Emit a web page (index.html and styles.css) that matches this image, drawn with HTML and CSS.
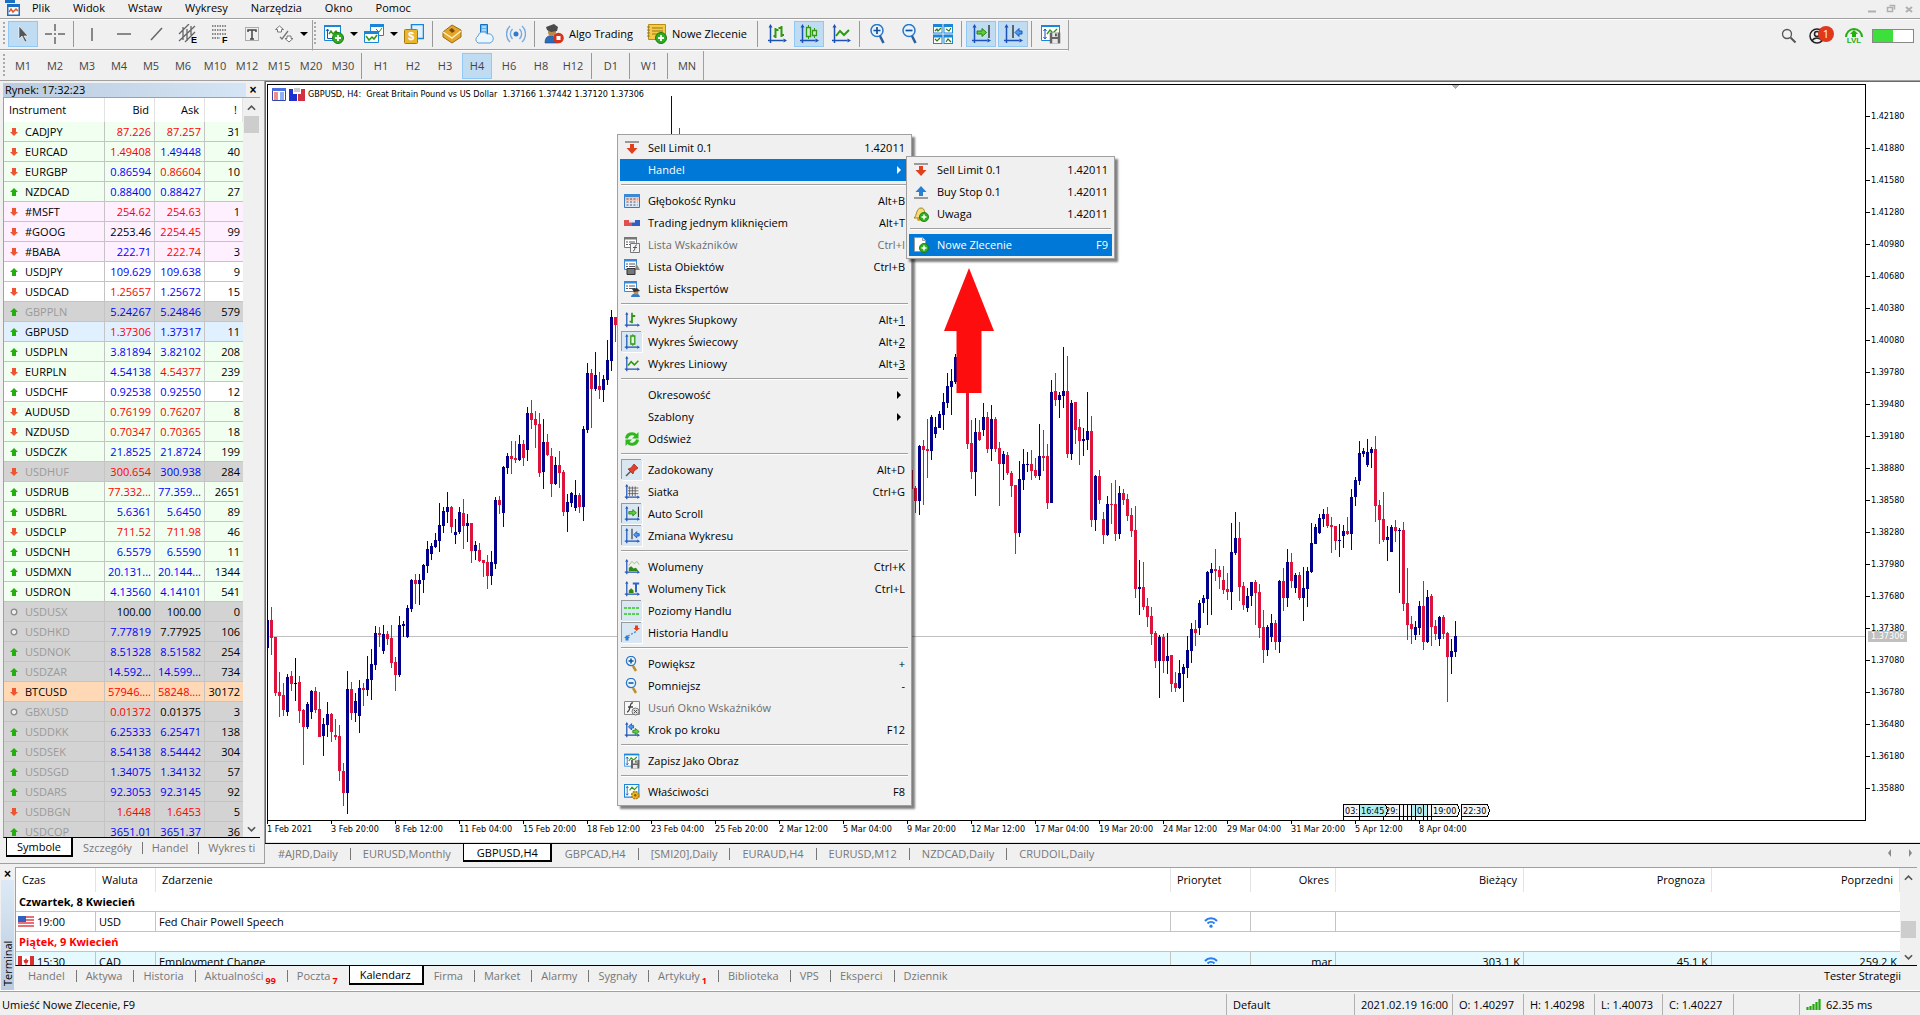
FILE: index.html
```html
<!DOCTYPE html>
<html lang="pl">
<head>
<meta charset="utf-8">
<title>GBPUSD,H4</title>
<link rel="stylesheet" href="styles.css">
</head>
<body>
<svg class="sprite" aria-hidden="true">
  <symbol id="axes" viewBox="0 0 20 20"><path class="ax" d="M3.5 3v13.500h13M1 16.500h2.500M3.500 16.500v2.500"/><path fill="#1b52b8" d="M3.500 0l2 3.500h-4zM20 16.500l-3.500-2v4z"/></symbol>
  <symbol id="plus-badge" viewBox="0 0 12 12"><circle cx="6" cy="6" r="5.500" fill="#2fae1f" stroke="#187a10"/><path d="M6 3v6M3 6h6" stroke="#fff" stroke-width="1.800"/></symbol>
  <symbol id="disk" viewBox="0 0 12 12"><path fill="#666" d="M0 0h12v12H0z"/><path fill="#e6e6e6" d="M3 0h6v5H3zM3 7h6v5H3z"/><path fill="#555" d="M6 1h2v3H6z"/></symbol>
  <symbol id="app" viewBox="0 0 16 16"><path fill="#1a6fc4" d="M1 0h10v3H1zM3 4h13v12H3z"/><path fill="#fff" d="M4.500 7h10v7.500h-10z"/><path d="M5 12l2-3 2 3 3-3 2 2" fill="none" stroke="#e2552c" stroke-width="1.500"/></symbol>
  <symbol id="cursor" viewBox="0 0 20 20"><path d="M6 2v13l3-3 3 6 2-1-3-5h4z" fill="#555" stroke="#fff" stroke-width=".6"/></symbol>
  <symbol id="cross" viewBox="0 0 20 20"><path d="M10 0v7M10 13v7M0 10h7M13 10h7M9 10h2" stroke="#666" stroke-width="1.500"/></symbol>
  <symbol id="vline" viewBox="0 0 20 20"><path d="M10 4v13" stroke="#666" stroke-width="1.500"/></symbol>
  <symbol id="hline" viewBox="0 0 20 20"><path d="M3 10h14" stroke="#666" stroke-width="1.500"/></symbol>
  <symbol id="slash" viewBox="0 0 20 20"><path d="M5 16L16 4" stroke="#666" stroke-width="1.500"/></symbol>
  <symbol id="text" viewBox="0 0 20 20"><path d="M3.500 3.500h13v13h-13z" fill="none" stroke="#666" stroke-dasharray="1 1"/><path d="M6 8V6h8v2M10 6v9M8 15h4" fill="none" stroke="#444" stroke-width="1.500"/></symbol>
  <symbol id="shapes" viewBox="0 0 20 20"><path d="M5.500 2l4 3.500h-2V8h-4V5.500h-2zM15 18l-4-3.500h2V12h4v2.500h2z" fill="#fff" stroke="#777"/><path d="M6 13l2 2 6-8" fill="none" stroke="#777" stroke-width="1.300"/></symbol>
  <symbol id="newchart" viewBox="0 0 20 20"><path d="M.5 1.500h16v15H.5z" fill="#fff" stroke="#1a86d8"/><path fill="#1a86d8" d="M0 1h17v2H0z"/><path d="M3.500 5v9.500H12M2 7l1.500-2L5 7" fill="none" stroke="#1b52b8"/><path d="M5 10l2-3 2 3 3-3 3 4" fill="none" stroke="#2e9a12" stroke-width="1.400"/><use href="#plus-badge" x="8" y="8" width="12" height="12"/></symbol>
  <symbol id="windows" viewBox="0 0 20 20"><path d="M6.500 1.500h13v10h-13z" fill="#fff" stroke="#1a86d8"/><path fill="#1a86d8" d="M6 0h14v3H6z"/><path d="M12 5l3 3 3-4" fill="none" stroke="#2e9a12"/><path d="M.5 8.500h14v10H.5z" fill="#fff" stroke="#1a86d8"/><path fill="#1a86d8" d="M0 7h15v3H0z"/><path d="M2 12l3 4 3-3 2 2 3-4" fill="none" stroke="#2e9a12" stroke-width="1.500"/></symbol>
  <symbol id="coins" viewBox="0 0 20 20"><path d="M1 8l9-7 9 5v7l-9 6-9-6z" fill="#e5a52c" stroke="#9a6a10"/><path d="M1 8l9 6 9-7" fill="none" stroke="#fff0b8" stroke-width="1.500"/><path d="M7 6l3-2 3 3-3 2z" fill="#7b4b08"/></symbol>
  <symbol id="cloud" viewBox="0 0 20 20"><path d="M6.500.5h7V12h-7z" fill="#5ab4f0" stroke="#1670c0"/><path d="M8 3h4M8 6h4" stroke="#fff"/><path d="M4 19a4 4 0 010-7 5 5 0 019-2 4.500 4.500 0 013 9z" fill="#eef6fd" stroke="#5a9fd8"/></symbol>
  <symbol id="signal" viewBox="0 0 20 20"><circle cx="10" cy="10" r="2.500" fill="#2f7ad0"/><path d="M6.500 5a7 7 0 000 10M13.500 5a7 7 0 010 10M4 2a11 11 0 000 16M16 2a11 11 0 010 16" fill="none" stroke="#76a9e0" stroke-width="1.400"/></symbol>
  <symbol id="algo" viewBox="0 0 20 20"><path d="M1 19c0-6 3-8 8-7l5 7z" fill="#2d6cb8" stroke="#244a80" stroke-width=".6"/><circle cx="8" cy="8" r="4" fill="#b8894a"/><path d="M2 3l8-3 4 3-1 4-6 1-4-2z" fill="#4b4b4b"/><circle cx="14.500" cy="14" r="5.300" fill="#d8321c"/><path fill="#fff" d="M12.500 12h4v4h-4z"/></symbol>
  <symbol id="order" viewBox="0 0 20 20"><path d="M1.500.5h17v15h-17z" fill="#f3cb46" stroke="#bb8b12"/><path d="M5 4h11M5 7h11M5 10h6" stroke="#9b7411"/><path d="M0 3h3M0 6h3M0 9h3M0 12h3" stroke="#777"/><use href="#plus-badge" x="8" y="8" width="12" height="12"/></symbol>
  <symbol id="bars" viewBox="0 0 20 20"><use href="#axes"/><path d="M8.500 4v10M8.500 12H6.500M8.500 6h3M14.500 2v11M14.500 4h-3M14.500 11h2.500" fill="none" stroke="#2e9a12" stroke-width="2"/></symbol>
  <symbol id="bar1" viewBox="0 0 20 20"><use href="#axes"/><path d="M10 1v13M10 12H7M10 5h4" fill="none" stroke="#2e9a12" stroke-width="2.200"/></symbol>
  <symbol id="candles" viewBox="0 0 20 20"><use href="#axes"/><path d="M9.500 1v14M15.500 4v10" stroke="#2e9a12"/><path d="M7.500 3.500h4v9h-4zM13.500 6.500h4v5h-4z" fill="#cfe8cf" stroke="#2e9a12" stroke-width="1.300"/></symbol>
  <symbol id="candle1" viewBox="0 0 20 20"><use href="#axes"/><path d="M11 0v15" stroke="#2e9a12"/><path d="M8.500 2.500h5v10h-5z" fill="#e4f4e0" stroke="#2e9a12" stroke-width="1.600"/></symbol>
  <symbol id="linec" viewBox="0 0 20 20"><use href="#axes"/><path d="M5 12l4-5 4 4 5-5" fill="none" stroke="#2e9a12" stroke-width="2"/></symbol>
  <symbol id="zin" viewBox="0 0 20 20"><path d="M10.500 11l4 8" stroke="#2a5f9a" stroke-width="2.500"/><circle cx="8" cy="6.500" r="6" fill="#e6f4ff" stroke="#2a78c8" stroke-width="1.500"/><path d="M8 3v7M4.500 6.500h7" stroke="#154f98" stroke-width="1.700"/></symbol>
  <symbol id="zout" viewBox="0 0 20 20"><path d="M10.500 11l4 8" stroke="#2a5f9a" stroke-width="2.500"/><circle cx="8" cy="6.500" r="6" fill="#e6f4ff" stroke="#2a78c8" stroke-width="1.500"/><path d="M4.500 6.500h7" stroke="#154f98" stroke-width="1.700"/></symbol>
  <symbol id="tiles" viewBox="0 0 20 20"><path fill="#1a86d8" d="M0 0h9.500v9.500H0zM10.500 0H20v9.500h-9.500zM0 10.500h9.500V20H0zM10.500 10.500H20V20h-9.500z"/><path fill="#fff" d="M1 3h7.500v5.500H1zM11.500 3H19v5.500h-7.500zM1 13.500h7.500V19H1zM11.500 13.500H19V19h-7.500z"/><path d="M2 7l2-2 1 2 3-3M13 5l3 2 2-3M2 15l2 2 3-3M13 18l2-3 3 3" fill="none" stroke="#2e7a12" stroke-width="1.200"/></symbol>
  <symbol id="scroll" viewBox="0 0 20 20"><use href="#axes"/><path d="M18 1v13" stroke="#222" stroke-width="1.300"/><path d="M6 7h5V4.500L15.500 8.500 11 12.500V10H6z" fill="#5fce35" stroke="#23850f"/></symbol>
  <symbol id="shift" viewBox="0 0 20 20"><use href="#axes"/><path d="M10 1v13" stroke="#222" stroke-width="1.300"/><path d="M19 7h-3V4.500l-4 4 4 4V10h3z" fill="#4c9df0" stroke="#1b52b8"/></symbol>
  <symbol id="save" viewBox="0 0 20 20"><path d="M.5 1.500h18v15H.5z" fill="#fff" stroke="#1a86d8"/><path fill="#1a86d8" d="M0 1h19v2H0z"/><path d="M4 5v9M2.500 7L4 5l1.500 2M2.500 13L4 15l1.500-2" fill="none" stroke="#1b52b8"/><path d="M6 10l3-4 3 3 4-4" fill="none" stroke="#2e9a12" stroke-width="1.400"/><use href="#disk" x="8.500" y="8" width="11" height="12"/></symbol>
  <symbol id="gear" viewBox="0 0 20 20"><path d="M.5.5h18v16H.5z" fill="#fff" stroke="#1a86d8" stroke-width="1.500"/><path d="M4 3v11M2.500 5L4 3l1.500 2M2.500 12L4 14l1.500-2" fill="none" stroke="#1b52b8"/><path d="M7 8l3-4 3 3 4-4" fill="none" stroke="#2e9a12" stroke-width="1.400"/><circle cx="14" cy="14" r="4.500" fill="#eab62c" stroke="#b88208" stroke-width="2" stroke-dasharray="2.500 1"/><circle cx="14" cy="14" r="1.500" fill="#8a6205"/></symbol>
  <symbol id="sell" viewBox="0 0 16 16"><path d="M1 2h14" stroke="#444"/><path d="M6 4h4v4h3.500L8 14 2.500 8H6z" fill="#e2401c"/></symbol>
  <symbol id="buy" viewBox="0 0 16 16"><path d="M1 14h14" stroke="#444"/><path d="M6 12h4V8h3.500L8 2 2.500 8H6z" fill="#2a7fd4"/></symbol>
  <symbol id="bell" viewBox="0 0 16 16"><path d="M1 12c3-2 2-10 7-10s3 7 5 10z" fill="#f5dc7a" stroke="#a88417"/><circle cx="6" cy="13" r="2" fill="#d0a020"/><use href="#plus-badge" x="6" y="6" width="10" height="10"/></symbol>
  <symbol id="doc" viewBox="0 0 16 16"><path d="M1.500.5h8l3 3v11h-11z" fill="#fff" stroke="#999"/><path d="M9.500.5v3h3" fill="#ddd" stroke="#999"/><use href="#plus-badge" x="6" y="6" width="10" height="10"/></symbol>
  <symbol id="depth" viewBox="0 0 16 16"><path d="M.5 1.500h15v13H.5z" fill="#fff" stroke="#3a78c0"/><path fill="#3a88d8" d="M0 1h16v3H0z"/><path fill="#f6c8ba" d="M1 4h14v4.500H1z"/><path fill="#d8e8fa" d="M1 8.500h14V14H1z"/><path d="M2.500 6h11M2.500 9h11M2.500 12h11" stroke="#556" stroke-dasharray="2 1.500"/></symbol>
  <symbol id="oneclick" viewBox="0 0 16 16"><path fill="#e05050" d="M0 5h8v6H0z"/><path fill="#3060c0" d="M8 5h8v6H8z"/><path fill="#e8e8ee" d="M5 5h6v2.500H5z"/></symbol>
  <symbol id="list" viewBox="0 0 16 16"><path d="M.5 1.500h12v9H.5z" fill="#fff" stroke="currentColor"/><path fill="currentColor" d="M0 0h13v2.500H0z"/><path d="M2 5h2M5 5h6M2 7.500h2M5 7.500h6" stroke="#556"/></symbol>
  <symbol id="indic" viewBox="0 0 16 16"><use href="#list" color="#777"/><path d="M6.500 6.500h9v9h-9z" fill="#f4f4f4" stroke="#777"/><path d="M13 8c-3-1-1 6-4 6M9 10.500h4" fill="none" stroke="#555"/></symbol>
  <symbol id="objs" viewBox="0 0 16 16"><use href="#list" color="#3a88d8"/><path d="M12 4l4 7h-5z" fill="#888"/><path d="M3 9.500h8v6H3z" fill="#777" stroke="#333"/></symbol>
  <symbol id="experts" viewBox="0 0 16 16"><use href="#list" color="#3a88d8"/><path d="M7 16c0-4 8-5 9 0z" fill="#2d7cd0"/><circle cx="12" cy="11" r="2.500" fill="#c09050"/><path d="M8 8l5-1 3 3-6 1z" fill="#333"/></symbol>
  <symbol id="refresh" viewBox="0 0 16 16"><path d="M2.500 7.500a5.500 5.500 0 019.500-3M13.500 8.500a5.500 5.500 0 01-9.500 3" fill="none" stroke="#2fb81c" stroke-width="3"/><path fill="#2fb81c" d="M14.500 1v6.500H8zM1.500 15V8.500H8z"/></symbol>
  <symbol id="pin" viewBox="0 0 16 16"><path d="M2 14l5-5" stroke="#555" stroke-width="1.500"/><path d="M4 7l3-1 3-4 4 4-4 3-1 3z" fill="#e2402c" stroke="#a02010" stroke-width=".7"/></symbol>
  <symbol id="grid" viewBox="0 0 20 20"><use href="#axes"/><path d="M7 3v12M10.500 3v12M14 3v12M5 5h13M5 8.500h13M5 12h13" stroke="#555"/></symbol>
  <symbol id="vol" viewBox="0 0 20 20"><use href="#axes"/><path d="M6 8l4-5 3 3 3-3 3 4" fill="none" stroke="#7cc060"/><path fill="#2e8a12" d="M6 15v-4l3-2 3 3 3-1 3 4z"/></symbol>
  <symbol id="tick" viewBox="0 0 20 20"><use href="#axes"/><path fill="#2e8a12" d="M6 15v-3l3-3 3 3v3z"/><path d="M11 3h8M15 3v11" stroke="#2a66c8" stroke-width="2.500"/></symbol>
  <symbol id="levels" viewBox="0 0 16 16"><path d="M0 5h16M0 11h16" stroke="#2fc81c" stroke-width="1.600" stroke-dasharray="3 1"/></symbol>
  <symbol id="history" viewBox="0 0 16 16"><path d="M4 11L13 6" stroke="#4c86d8" stroke-width="1.300" stroke-dasharray="2 1.500"/><path fill="#2a7fd4" d="M3 10l3 3H4.500v2.500h-3V13H0z"/><path fill="#e2401c" d="M12.500 6L9.500 3H11V.5h3V3h2z"/></symbol>
  <symbol id="mzin" viewBox="0 0 16 16"><path d="M9 10l3 5" stroke="#c0902c" stroke-width="2.500"/><circle cx="7" cy="5" r="4.600" fill="#e6f4ff" stroke="#2a78c8" stroke-width="1.300"/><path d="M7 2.500v5M4.500 5h5" stroke="#154f98" stroke-width="1.500"/></symbol>
  <symbol id="mzout" viewBox="0 0 16 16"><path d="M9 10l3 5" stroke="#c0902c" stroke-width="2.500"/><circle cx="7" cy="5" r="4.600" fill="#e6f4ff" stroke="#2a78c8" stroke-width="1.300"/><path d="M4.500 5h5" stroke="#154f98" stroke-width="1.500"/></symbol>
  <symbol id="delind" viewBox="0 0 16 16"><path d="M.5 1.500h15v13H.5z" fill="#f8f8f8" stroke="#888"/><path d="M9 3C5 2 7 12 3 12M4 7h5" fill="none" stroke="#444" stroke-width="1.300"/><circle cx="11.500" cy="11.500" r="3.500" fill="#ddd" stroke="#777"/><path d="M10 10l3 3M13 10l-3 3" stroke="#555"/></symbol>
  <symbol id="step" viewBox="0 0 20 20"><use href="#axes"/><path d="M12 7.500H9.500V10L5.500 6l4-4v2.500H12z" fill="#4c9df0" stroke="#1b52b8"/><path d="M11 10.500h3V8l5 4-5 4v-2.500h-3z" fill="#5fce35" stroke="#23850f"/></symbol>
  <symbol id="up" viewBox="0 0 8 8"><path d="M4 0l4 4H6v4H2V4H0z" fill="#22b00c"/></symbol>
  <symbol id="down" viewBox="0 0 8 8"><path d="M4 8l4-4H6V0H2v4H0z" fill="#ee5530"/></symbol>
  <symbol id="flat" viewBox="0 0 8 8"><circle cx="4" cy="4" r="2.800" fill="#eee" stroke="#888" stroke-width="1.300"/></symbol>
  <symbol id="wifi" viewBox="0 0 14 12"><path d="M1 5a8 8 0 0112 0M3.500 7.500a5 5 0 017 0" fill="none" stroke="#2a7cf0" stroke-width="2"/><circle cx="7" cy="10.200" r="1.600" fill="#2a7cf0"/></symbol>
  <symbol id="us" viewBox="0 0 16 11"><path fill="#fff" d="M0 0h16v11H0z"/><path d="M0 1h16M0 4h16M0 7h16M0 10h16" stroke="#e0404a" stroke-width="1.600"/><path fill="#3060c0" d="M0 0h8v6H0z"/></symbol>
  <symbol id="ca" viewBox="0 0 16 11"><path fill="#fff" d="M0 0h16v11H0z"/><path fill="#d83030" d="M0 0h4v11H0zM12 0h4v11h-4zM8 2l1 2 1.500 0-1 3H8.500v2h-1V7h-1l-1-3H7z"/></symbol>
  <symbol id="cup" viewBox="0 0 10 6"><path d="M1 5l4-4 4 4" fill="none" stroke="#555" stroke-width="1.800"/></symbol>
  <symbol id="cdown" viewBox="0 0 10 6"><path d="M1 1l4 4 4-4" fill="none" stroke="#555" stroke-width="1.800"/></symbol>
</svg>

<header>
  <nav class="menubar">
    <svg class="i16"><use href="#app"/></svg>
    <button>Plik</button><button>Widok</button><button>Wstaw</button><button>Wykresy</button><button>Narzędzia</button><button>Okno</button><button>Pomoc</button>
    <svg class="wincontrols" viewBox="0 0 48 12"><path d="M2 9.500h8" stroke="#b0b0b0" stroke-width="2"/><path d="M21.500 5.500h5v4h-5zM23.500 3.500h5v4" fill="none" stroke="#b0b0b0" stroke-width="1.500"/><path d="M40 5l6 5M46 5l-6 5" stroke="#b0b0b0" stroke-width="2"/></svg>
  </nav>
  <div class="toolrow">
    <div class="toolbar">
      <button class="tb on" aria-label="Kursor"><svg><use href="#cursor"/></svg></button>
      <button class="tb" aria-label="Celownik"><svg><use href="#cross"/></svg></button>
      <i class="sep"></i>
      <button class="tb" aria-label="Linia pionowa"><svg><use href="#vline"/></svg></button>
      <button class="tb" aria-label="Linia pozioma"><svg><use href="#hline"/></svg></button>
      <button class="tb" aria-label="Linia trendu"><svg><use href="#slash"/></svg></button>
      <button class="tb" aria-label="Kanał"><svg viewBox="0 0 20 20"><path d="M1 10L11 0M1 17L17 2M7 18L17 8M5 3v13M9 5v12M13 2v9" stroke="#666" stroke-width="1.300"/><text x="13" y="19" class="gl">E</text></svg></button>
      <button class="tb" aria-label="Fibonacci"><svg viewBox="0 0 20 20"><path d="M2 2h14M2 6h14M2 10h14M2 14h8" stroke="#666" stroke-width="1.300" stroke-dasharray="1.500 1"/><text x="12" y="19" class="gl">F</text></svg></button>
      <button class="tb" aria-label="Tekst"><svg><use href="#text"/></svg></button>
      <button class="tb" aria-label="Kształty"><svg><use href="#shapes"/></svg></button>
      <i class="caret"></i>
    </div>
    <div class="toolbar">
      <button class="tb" aria-label="Nowy wykres"><svg><use href="#newchart"/></svg></button><i class="caret"></i>
      <button class="tb" aria-label="Okna"><svg><use href="#windows"/></svg></button><i class="caret"></i>
      <button class="tb" aria-label="Symbole"><svg viewBox="0 0 20 20"><path d="M7.500.5h12v14h-12z" fill="#dff0ff" stroke="#1a86d8" stroke-width="1.500"/><rect x=".5" y="5.500" width="13" height="14" rx="1" fill="#eab62c" stroke="#a87808"/><text x="4" y="16" class="dl">$</text></svg></button>
      <i class="sep"></i>
      <button class="tb" aria-label="Market"><svg><use href="#coins"/></svg></button>
      <button class="tb" aria-label="VPS"><svg><use href="#cloud"/></svg></button>
      <button class="tb" aria-label="Sygnały"><svg><use href="#signal"/></svg></button>
      <i class="sep"></i>
      <button class="tl"><svg><use href="#algo"/></svg>Algo Trading</button>
      <button class="tl"><svg><use href="#order"/></svg>Nowe Zlecenie</button>
      <i class="sep"></i>
      <button class="tb" aria-label="Wykres słupkowy"><svg><use href="#bars"/></svg></button>
      <button class="tb on" aria-label="Wykres świecowy"><svg><use href="#candles"/></svg></button>
      <button class="tb" aria-label="Wykres liniowy"><svg><use href="#linec"/></svg></button>
      <i class="sep"></i>
      <button class="tb" aria-label="Powiększ"><svg><use href="#zin"/></svg></button>
      <button class="tb" aria-label="Pomniejsz"><svg><use href="#zout"/></svg></button>
      <button class="tb" aria-label="Kafelki"><svg><use href="#tiles"/></svg></button>
      <i class="sep"></i>
      <button class="tb on" aria-label="Auto scroll"><svg><use href="#scroll"/></svg></button>
      <button class="tb on" aria-label="Zmiana wykresu"><svg><use href="#shift"/></svg></button>
      <i class="sep"></i>
      <button class="tb" aria-label="Zapisz"><svg><use href="#save"/></svg></button>
    </div>
    <div class="account">
      <svg width="16" height="16" viewBox="0 0 16 16"><circle cx="6" cy="6" r="4.500" fill="none" stroke="#555" stroke-width="1.300"/><path d="M9.500 9.500l5 5" stroke="#555" stroke-width="2"/></svg>
      <button class="user" aria-label="Konto"><svg width="16" height="16" viewBox="0 0 16 16"><circle cx="8" cy="8" r="7" fill="none" stroke="#222" stroke-width="1.500"/><circle cx="8" cy="6" r="2.500" fill="none" stroke="#222" stroke-width="1.500"/><path d="M3 13c2-4 8-4 10 0" fill="none" stroke="#222" stroke-width="1.500"/></svg><b>1</b></button>
      <button class="level" aria-label="LVL"><svg width="20" height="11" viewBox="0 0 20 11"><path d="M2 11a8 8 0 0116 0" fill="none" stroke="#22b00c" stroke-width="2"/><path d="M10 4l4 4h-2v3H8V8H6z" fill="#22b00c"/></svg><span>LVL</span></button>
      <span class="battery"></span>
    </div>
  </div>
  <div class="frames">
    <button>M1</button><button>M2</button><button>M3</button><button>M4</button><button>M5</button><button>M6</button><button>M10</button><button>M12</button><button>M15</button><button>M20</button><button>M30</button>
    <i class="sep"></i><button>H1</button><button>H2</button><button>H3</button><button class="on">H4</button><button>H6</button><button>H8</button><button>H12</button>
    <i class="sep"></i><button>D1</button><i class="sep"></i><button>W1</button><i class="sep"></i><button>MN</button>
  </div>
</header>

<main>
  <aside class="market">
    <div class="caption"><span>Rynek: 17:32:23</span><button class="x" aria-label="Zamknij">×</button></div>
    <div class="scrollwrap">
      <div class="tablebox">
        <table class="quotes">
          <colgroup><col><col class="c50"><col class="c50"><col class="c38"></colgroup>
          <thead><tr><th>Instrument</th><th>Bid</th><th>Ask</th><th>!</th></tr></thead>
          <tbody id="quotes"></tbody>
        </table>
      </div>
      <div class="vscroll"><svg><use href="#cup"/></svg><i></i><svg><use href="#cdown"/></svg></div>
    </div>
    <nav class="tabs left"><button class="active">Symbole</button><button>Szczegóły</button><button>Handel</button><button>Wykres ti</button></nav>
  </aside>

  <section class="mdi">
    <div class="chart">
      <div class="plot">
        <div class="title">
          <svg width="14" height="13" viewBox="0 0 14 13"><path d="M.5.500h13v12H.5z" fill="#fff" stroke="#3344aa"/><path fill="#4a6fe0" d="M0 0h14v3H0z"/><path d="M2 5h4M2 7h4M2 9h4M2 11h4" stroke="#e66" stroke-width="1.500"/><path d="M8 5h4M8 7h4M8 9h4M8 11h4" stroke="#69e" stroke-width="1.500"/></svg>
          <svg width="16" height="13" viewBox="0 0 16 13"><path fill="#2030d0" d="M0 1h4v5h4v7H0z"/><path fill="#d03040" d="M9 13V6h3V1h4v12z"/><path fill="#ccc" d="M5 0h6v4H5z"/></svg>
          <span>GBPUSD, H4:&nbsp; Great Britain Pound vs US Dollar&nbsp; 1.37166 1.37442 1.37120 1.37306</span>
        </div>
        <svg id="candles-layer" class="candles"></svg>
      </div>
      <div class="prices"><ol id="prices"></ol><span class="last">1.37306</span></div>
      <ol class="dates" id="dates"></ol>
    </div>
    <nav class="tabs docs"><button>#AJRD,Daily</button><button>EURUSD,Monthly</button><button class="active">GBPUSD,H4</button><button>GBPCAD,H4</button><button>[SMI20],Daily</button><button>EURAUD,H4</button><button>EURUSD,M12</button><button>NZDCAD,Daily</button><button>CRUDOIL,Daily</button><svg class="pager" viewBox="0 0 28 8"><path d="M5 0v8L2 4zM23 0v8l3-4z" fill="#888"/></svg></nav>
  </section>
</main>

<section class="terminal">
  <div class="strip"><button class="x" aria-label="Zamknij">×</button><span>Terminal</span></div>
  <div class="tbody">
    <div class="scrollwrap">
      <div class="tablebox">
        <table class="calendar">
          <colgroup><col class="c80"><col class="c60"><col><col class="c80"><col class="c85"><col class="c188"><col class="c188"><col class="c188"></colgroup>
          <thead><tr><th>Czas</th><th>Waluta</th><th>Zdarzenie</th><th>Priorytet</th><th class="r">Okres</th><th class="r">Bieżący</th><th class="r">Prognoza</th><th class="r">Poprzedni</th></tr></thead>
          <tbody>
            <tr class="day"><td colspan="8">Czwartek, 8 Kwiecień</td></tr>
            <tr><td><span class="flag"><svg><use href="#us"/></svg>19:00</span></td><td>USD</td><td>Fed Chair Powell Speech</td><td class="c"><svg class="wifi"><use href="#wifi"/></svg></td><td class="r"></td><td colspan="3"></td></tr>
            <tr class="day red"><td colspan="8">Piątek, 9 Kwiecień</td></tr>
            <tr class="hot"><td><span class="flag"><svg><use href="#ca"/></svg>15:30</span></td><td>CAD</td><td>Employment Change</td><td class="c"><svg class="wifi"><use href="#wifi"/></svg></td><td class="r">mar</td><td class="r">303.1 K</td><td class="r">45.1 K</td><td class="r">259.2 K</td></tr>
          </tbody>
        </table>
      </div>
      <div class="vscroll term"><svg><use href="#cup"/></svg><i></i><svg><use href="#cdown"/></svg></div>
    </div>
    <nav class="tabs tools"><button>Handel</button><button>Aktywa</button><button>Historia</button><button>Aktualności<sub>99</sub></button><button>Poczta<sub>7</sub></button><button class="active">Kalendarz</button><button>Firma</button><button>Market</button><button>Alarmy</button><button>Sygnały</button><button>Artykuły<sub>1</sub></button><button>Biblioteka</button><button>VPS</button><button>Eksperci</button><button>Dziennik</button><a href="#tester">Tester Strategii</a></nav>
  </div>
</section>

<footer class="status">
  <span class="hint">Umieść Nowe Zlecenie, F9</span>
  <span class="w128">Default</span><span class="w98">2021.02.19 16:00</span><span class="w71">O: 1.40297</span><span class="w71">H: 1.40298</span><span class="w68">L: 1.40073</span><span class="w71">C: 1.40227</span><span class="w66"></span>
  <span class="ping"><svg width="15" height="11" viewBox="0 0 15 11"><path d="M1.500 11V8M4.500 11V7M7.500 11V5M10.500 11V3M13.500 11V0" stroke="#22a80c" stroke-width="2.200"/></svg>62.35 ms</span>
</footer>

<ul class="menu main" role="menu">
  <li><button><svg><use href="#sell"/></svg>Sell Limit 0.1<kbd>1.42011</kbd></button></li>
  <li><button class="hl"><svg></svg>Handel<i class="sub"></i></button></li>
  <li class="rule"></li>
  <li><button><svg><use href="#depth"/></svg>Głębokość Rynku<kbd>Alt+B</kbd></button></li>
  <li><button><svg><use href="#oneclick"/></svg>Trading jednym kliknięciem<kbd>Alt+T</kbd></button></li>
  <li><button disabled><svg><use href="#indic"/></svg>Lista Wskaźników<kbd>Ctrl+I</kbd></button></li>
  <li><button><svg><use href="#objs"/></svg>Lista Obiektów<kbd>Ctrl+B</kbd></button></li>
  <li><button><svg><use href="#experts"/></svg>Lista Ekspertów</button></li>
  <li class="rule"></li>
  <li><button><svg><use href="#bar1"/></svg>Wykres Słupkowy<kbd>Alt+<u>1</u></kbd></button></li>
  <li><button><svg class="ck"><use href="#candle1"/></svg>Wykres Świecowy<kbd>Alt+<u>2</u></kbd></button></li>
  <li><button><svg><use href="#linec"/></svg>Wykres Liniowy<kbd>Alt+<u>3</u></kbd></button></li>
  <li class="rule"></li>
  <li><button><svg></svg>Okresowość<i class="sub"></i></button></li>
  <li><button><svg></svg>Szablony<i class="sub"></i></button></li>
  <li><button><svg><use href="#refresh"/></svg>Odśwież</button></li>
  <li class="rule"></li>
  <li><button><svg class="ck"><use href="#pin"/></svg>Zadokowany<kbd>Alt+D</kbd></button></li>
  <li><button><svg><use href="#grid"/></svg>Siatka<kbd>Ctrl+G</kbd></button></li>
  <li><button><svg class="ck"><use href="#scroll"/></svg>Auto Scroll</button></li>
  <li><button><svg class="ck"><use href="#shift"/></svg>Zmiana Wykresu</button></li>
  <li class="rule"></li>
  <li><button><svg><use href="#vol"/></svg>Wolumeny<kbd>Ctrl+K</kbd></button></li>
  <li><button><svg><use href="#tick"/></svg>Wolumeny Tick<kbd>Ctrl+L</kbd></button></li>
  <li><button><svg class="ck"><use href="#levels"/></svg>Poziomy Handlu</button></li>
  <li><button><svg class="ck"><use href="#history"/></svg>Historia Handlu</button></li>
  <li class="rule"></li>
  <li><button><svg><use href="#mzin"/></svg>Powiększ<kbd>+</kbd></button></li>
  <li><button><svg><use href="#mzout"/></svg>Pomniejsz<kbd>-</kbd></button></li>
  <li><button disabled><svg><use href="#delind"/></svg>Usuń Okno Wskaźników</button></li>
  <li><button><svg><use href="#step"/></svg>Krok po kroku<kbd>F12</kbd></button></li>
  <li class="rule"></li>
  <li><button><svg><use href="#save"/></svg>Zapisz Jako Obraz</button></li>
  <li class="rule"></li>
  <li><button><svg><use href="#gear"/></svg>Właściwości<kbd>F8</kbd></button></li>
</ul>
<ul class="menu trade" role="menu">
  <li><button><svg><use href="#sell"/></svg>Sell Limit 0.1<kbd>1.42011</kbd></button></li>
  <li><button><svg><use href="#buy"/></svg>Buy Stop 0.1<kbd>1.42011</kbd></button></li>
  <li><button><svg><use href="#bell"/></svg>Uwaga<kbd>1.42011</kbd></button></li>
  <li class="rule"></li>
  <li><button class="hl"><svg><use href="#doc"/></svg>Nowe Zlecenie<kbd>F9</kbd></button></li>
</ul>
<svg class="pointer" viewBox="0 0 50 125"><path fill="#fd0d0d" d="M25 0l25 63H37.500v62H12.500V63H0z"/></svg>
<script src="script.js"></script>
</body>
</html>
```
FILE: styles.css
```css
* { box-sizing: border-box; }
body { margin: 0; height: 100vh; display: flex; flex-direction: column; position: relative; background: #f0f0f0; color: #000; font: 11px/16px "Open Sans", "Noto Sans", sans-serif; overflow: hidden; }
button { font: inherit; color: inherit; background: none; border: 0; padding: 0; margin: 0; white-space: nowrap; }
ul, ol { list-style: none; margin: 0; padding: 0; }
svg { display: block; flex: none; }
.sprite { position: absolute; width: 0; height: 0; }
.ax { fill: none; stroke: #1b52b8; stroke-width: 1.500; }
.gl { font: bold 9px "Liberation Sans", sans-serif; }
.dl { font: bold 11px "Liberation Sans", sans-serif; fill: #fff; }
.i16 { width: 16px; height: 16px; }

/* menu bar and toolbars */
.menubar { display: flex; align-items: center; height: 20px; padding: 0 6px 3px 4px; gap: 23px; border-bottom: 1px solid #fff; box-shadow: inset 0 -1px #a0a0a0; }
.menubar .i16 { margin-right: -11px; }
.wincontrols { width: 48px; height: 12px; margin-left: auto; }
.toolrow { display: flex; height: 31px; }
.toolbar { display: flex; align-items: center; height: 31px; padding: 0 4px 3px 7px; border-right: 1px solid #a0a0a0; border-bottom: 1px solid #fff; box-shadow: inset 0 -1px #a0a0a0; }
.toolbar + .toolbar { padding: 0 1px 3px 5px; }
.toolbar + .toolbar .sep { margin-right: 3px; }
.toolbar::before, .frames::before { content: ""; width: 2px; height: 24px; margin: 0 2px 0 -4px; background: repeating-linear-gradient(#aaa 0 2px, transparent 2px 4px); }
.tb { display: flex; align-items: center; justify-content: center; width: 30px; height: 26px; margin: 0 1px; }
.tb svg, .tl svg { width: 20px; height: 20px; }
.on { background: #c0dcf3; outline: 1px solid #90c8f6; outline-offset: -1px; }
.sep { width: 1px; height: 26px; margin: 0 2px; background: #999; }
.caret { width: 0; height: 0; border: 4px solid transparent; border-top-color: #000; border-bottom: 0; margin: 0; }
.tl { display: flex; align-items: center; gap: 5px; padding: 0 8px 0 6px; }
.account { display: flex; align-items: center; gap: 12px; margin-left: auto; padding: 0 6px 0 0; height: 31px; }
.user { display: flex; width: 27px; }
.user b { flex: none; width: 16px; height: 16px; margin: -2px 0 0 -7px; border-radius: 8px; background: #e0381c; color: #fff; font-weight: 400; line-height: 16px; }
.level { width: 20px; margin: 0 -4px; }
.level span { display: block; font: bold 8px/8px "Liberation Sans", sans-serif; color: #22b00c; }
.battery { width: 42px; height: 14px; border: 1px solid #888; background: linear-gradient(90deg, #3ddf3a 50%, #fff 50%); }
.frames { display: flex; align-items: center; height: 29px; width: 704px; padding-left: 7px; border-right: 1px solid #a0a0a0; color: #444; }
.frames button { width: 30px; height: 26px; margin: 0 1px; }
.frames .sep { margin: 0 3px 0 2px; }

/* workspace */
main { display: flex; flex: 1; min-height: 0; border-top: 1px solid #a0a0a0; }
.market { display: flex; flex-direction: column; width: 264px; flex: none; padding: 2px 4px 2px 3px; border-bottom: 1px solid #a0a0a0; }
.caption { display: flex; height: 14px; line-height: 13px; flex: none; }
.caption span { flex: 1; padding-left: 2px; background: linear-gradient(90deg, #b9cbdf, #d6e5f5); }
.x { width: 14px; height: 13px; font: bold 12px/12px "Liberation Sans", sans-serif; }
.scrollwrap { display: flex; flex: 1; min-height: 0; border: 1px solid #a0a0a0; border-right: 0; border-bottom: 1px solid #000; }
.tablebox { flex: 1; min-width: 0; overflow: hidden; background: #fff; }
table { width: 100%; table-layout: fixed; border-collapse: separate; border-spacing: 0; }
.c38 { width: 38px; } .c50 { width: 50px; } .c60 { width: 60px; } .c80 { width: 80px; } .c85 { width: 85px; } .c188 { width: 188px; }
th { height: 24px; padding: 0 5px; font-weight: 400; border-right: 1px solid #e3e3e3; text-align: left; background: #fff; }
td { height: 20px; padding: 0 3px; border-right: 1px solid #c4c4c4; border-bottom: 1px solid #c4c4c4; white-space: nowrap; line-height: 18px; }
.quotes th, .quotes td { text-align: right; }
.quotes th:first-child { text-align: left; }
.quotes td:last-child, .calendar td:last-child { border-right: 0; }
.quotes td:first-child { text-align: left; }
.name { display: flex; align-items: center; gap: 7px; padding-left: 3px; }
.name svg { width: 8px; height: 8px; }
.g { background: #f0fff0; } .p { background: #fff0ff; } .s { background: #d3d3d3; } .b { background: #e1f0ff; } .o { background: #ffd8b5; }
.s .name { color: #9a9a9a; }
.cb { color: #00f; } .cr { color: #f00; }
.vscroll { display: flex; flex-direction: column; align-items: center; width: 17px; padding: 7px 1px 5px; background: #f0f0f0; flex: none; }
.vscroll svg { width: 9px; height: 6px; }
.vscroll i { width: 15px; height: 17px; margin: 5px 0 auto; background: #cdcdcd; }

/* tabs */
.tabs { display: flex; height: 20px; flex: none; color: #777; overflow: hidden; }
.tabs button { position: relative; padding: 0 10px; line-height: 18px; }
.tabs button + button::before { content: ""; position: absolute; left: 0; top: 4px; height: 12px; border-left: 1px solid #777; }
.tabs .active { color: #000; background: #fff; border: 1px solid #000; border-width: 0 2px 2px 1px; margin-bottom: 1px; }
.tabs .active::before, .tabs .active + button::before { display: none; }
.tabs sub { color: #f00; font-weight: 700; font-size: 9px; line-height: 8px; margin-left: 2px; vertical-align: -4px; }
.left { margin: 0 0 3px 3px; }
.docs { border-top: 1px solid #000; }
.docs button { padding: 0 12px 0 13px; }
.tools { padding-left: 3px; }
.tools button { padding: 0 11px 0 10px; }
.pager { width: 28px; height: 8px; margin: 5px 6px 0 auto; }

/* chart window */
.mdi { display: flex; flex-direction: column; flex: 1; min-width: 0; border-left: 1px solid #a0a0a0; padding-bottom: 1px; }
.chart { display: grid; grid-template: 1fr 20px / 1fr 54px; flex: 1; min-height: 0; padding: 2px 0 2px 1px; background: #fff; border: 1px solid #696969; border-width: 1px 0 0 1px; box-shadow: inset 0 -1px #e3e3e3; font: 9px/11px "DejaVu Sans Condensed", "Noto Sans", sans-serif; }
.plot { position: relative; border: 1px solid #000; min-width: 0; min-height: 0; overflow: hidden; }
.candles { width: 100%; height: 100%; shape-rendering: crispEdges; }
.title { position: absolute; left: 4px; top: 3px; display: flex; align-items: center; gap: 3px; white-space: pre; }
.prices { position: relative; padding-top: 16px; }
.prices li { display: flex; align-items: center; height: 32px; gap: 1px; }
.prices li::before { content: ""; width: 4px; height: 1px; background: #000; }
.last { position: absolute; left: 2px; top: 547px; width: 39px; padding-left: 3px; background: #c0c0c0; color: #fff; }
.dates { grid-column: 1 / 3; display: flex; overflow: hidden; }
.dates li { flex: none; width: 64px; white-space: nowrap; }
.dates li::before { content: ""; display: block; width: 1px; height: 3px; background: #000; }

/* terminal */
.terminal { display: flex; flex: none; height: 127px; padding: 3px 3px 0 0; border-bottom: 1px solid #fff; }
.strip { display: flex; flex-direction: column; align-items: center; justify-content: space-between; width: 15px; flex: none; }
.strip span { width: 13px; flex: 1; margin-right: 1px; writing-mode: vertical-rl; transform: rotate(180deg); line-height: 13px; padding-top: 4px; background: linear-gradient(#b9cbdf, #dde9f6); }
.tbody { display: flex; flex-direction: column; flex: 1; min-width: 0; padding-bottom: 4px; }
.calendar th { padding: 0 6px; }
.calendar .r { text-align: right; }
.calendar td.c svg { margin: 0 auto; }
.wifi { width: 14px; height: 12px; }
.flag { display: flex; align-items: center; gap: 3px; margin-left: -1px; }
.flag svg { width: 16px; height: 11px; }
.day { font-weight: 700; }
.red { color: #f00; }
.hot { background: #e5faff; }
.term i { margin-top: 40px; }
.tools a { margin: 2px 16px 0 auto; color: #000; text-decoration: none; }

/* status bar */
.status { display: flex; align-items: center; height: 24px; flex: none; padding: 2px 0 0; border-top: 1px solid #a0a0a0; line-height: 21px; white-space: nowrap; }
.status span { height: 21px; padding-left: 6px; border-left: 1px solid #b0b0b0; }
.status .hint { flex: 1; border: 0; padding-left: 2px; }
.w128 { width: 128px; } .w98 { width: 98px; } .w71 { width: 71px; } .w68 { width: 68px; } .w66 { width: 66px; }
.ping { display: flex; align-items: center; gap: 5px; width: 121px; }

/* context menus */
.menu { position: absolute; padding: 2px; background: #f0f0f0; border: 1px solid #a0a0a0; box-shadow: 3px 3px 2px rgba(0, 0, 0, .5); }
.main { left: 617px; top: 134px; width: 295px; }
.trade { left: 906px; top: 156px; width: 209px; }
.menu button { display: flex; align-items: center; width: 100%; height: 22px; padding: 0 4px 0 2px; text-align: left; }
.menu svg { width: 20px; height: 20px; padding: 2px; margin-right: 6px; }
.menu .ck { background: #d9e7f3; box-shadow: -1px -1px #999, 1px 1px #fff; }
.menu kbd { margin-left: auto; font: inherit; }
.menu .hl { background: #0078d7; color: #fff; }
.menu button:disabled { color: #6d6d6d; }
.rule { height: 2px; margin: 3px 1px 4px; border-top: 1px solid #a0a0a0; border-bottom: 1px solid #fff; }
.sub { margin: 0 4px 0 auto; border: 4px solid transparent; border-left-color: currentColor; border-right: 0; }
.pointer { position: absolute; left: 944px; top: 268px; width: 50px; height: 125px; }
```
FILE: script.js
```js
// Market watch: background, direction, symbol, bid, ask, spread.
// The price prefix sets its colour: b blue, r red, k black.
const quotes = `g down CADJPY r87.226 r87.257 31
g down EURCAD r1.49408 b1.49448 40
g down EURGBP b0.86594 r0.86604 10
g up NZDCAD b0.88400 b0.88427 27
p down #MSFT r254.62 r254.63 1
p down #GOOG k2253.46 r2254.45 99
p down #BABA b222.71 r222.74 3
w up USDJPY b109.629 b109.638 9
w down USDCAD r1.25657 b1.25672 15
s up GBPPLN b5.24267 b5.24846 579
b up GBPUSD r1.37306 b1.37317 11
g up USDPLN b3.81894 b3.82102 208
g down EURPLN b4.54138 r4.54377 239
w up USDCHF b0.92538 b0.92550 12
g down AUDUSD r0.76199 r0.76207 8
g down NZDUSD r0.70347 r0.70365 18
g up USDCZK b21.8525 b21.8724 199
s down USDHUF r300.654 b300.938 284
g up USDRUB r77.332... b77.359... 2651
g up USDBRL b5.6361 b5.6450 89
g down USDCLP r711.52 r711.98 46
g up USDCNH b6.5579 b6.5590 11
g up USDMXN b20.131... b20.144... 1344
g up USDRON b4.13560 b4.14101 541
s flat USDUSX k100.00 k100.00 0
s flat USDHKD b7.77819 k7.77925 106
s up USDNOK b8.51328 b8.51582 254
s up USDZAR b14.592... b14.599... 734
o down BTCUSD r57946.... r58248.... 30172
s flat GBXUSD r0.01372 k0.01375 3
s up USDDKK b6.25333 b6.25471 138
s up USDSEK b8.54138 b8.54442 304
s up USDSGD b1.34075 b1.34132 57
s up USDARS b92.3053 b92.3145 92
s down USDBGN r1.6448 r1.6453 5
s up USDCOP b3651.01 b3651.37 36`;
document.getElementById('quotes').innerHTML = quotes.split('\n').map(line => {
  const [bg, dir, name, bid, ask, spread] = line.split(' ');
  const price = p => `<td class="c${p[0]}">${p.slice(1)}</td>`;
  return `<tr class="${bg}"><td><span class="name"><svg><use href="#${dir}"/></svg>${name}</span></td>${price(bid)}${price(ask)}<td>${spread}</td></tr>`;
}).join('');

document.getElementById('prices').innerHTML = Array.from({ length: 22 }, (_, i) => `<li>${(1.4218 - i * 0.003).toFixed(5)}</li>`).join('');
document.getElementById('dates').innerHTML = ['1 Feb 2021', '3 Feb 20:00', '8 Feb 12:00', '11 Feb 04:00', '15 Feb 20:00', '18 Feb 12:00', '23 Feb 04:00', '25 Feb 20:00', '2 Mar 12:00', '5 Mar 04:00', '9 Mar 20:00', '12 Mar 12:00', '17 Mar 04:00', '19 Mar 20:00', '24 Mar 12:00', '29 Mar 04:00', '31 Mar 20:00', '5 Apr 12:00', '8 Apr 04:00'].map(d => `<li>${d}</li>`).join('');

// Candle runs: first bar index, then colour, high, body top, body bottom, low.
const runs = [[-1, `B620,620,648,648 R607,620,638,655 R637,637,693,696 R672,692,696,717 R683,695,710,716 B674,677,712,716 R671,676,684,691 K658,683,684,701 R676,682,711,723 R709,710,727,765 B702,704,727,729 B690,691,712,719 R687,691,710,713 R692,709,737,737 B718,724,736,756 B702,714,725,737 R713,714,732,742 R719,735,737,740 R725,736,771,781 R763,771,793,806 B671,689,793,814 R682,689,713,720 B693,701,713,722 B680,688,716,733 R683,688,690,706 B656,679,690,696 B649,664,680,700 B626,633,665,670 R627,633,635,647 B625,634,651,654 R631,634,639,645 R625,638,663,668 R657,662,675,691 B616,625,675,677 B621,624,626,637 B605,608,637,638 B579,580,609,612 R574,580,584,604 B574,580,584,605 B564,565,580,593 B541,549,566,573 B543,546,554,560 B533,540,547,548 B503,525,541,552 B507,511,526,533 B492,507,512,523 R506,507,527,533 B519,532,535,544 B507,512,532,534 R499,513,526,549 B514,523,526,542 R523,523,551,563 B541,545,551,560 R543,550,561,562 R560,560,563,577 R555,562,576,589 B551,562,576,585 B497,500,564,569 R496,500,505,514 B466,467,513,527 B453,456,468,474 R441,456,459,474 R441,458,460,463 B435,444,460,461 R440,444,458,466 B407,413,450,461 R400,413,420,429 R411,419,425,448 R413,424,473,477 B419,442,472,489 R434,442,455,456 R448,456,484,497 B457,465,484,485 R451,465,473,488 R470,472,512,516 B494,502,512,532 B492,493,503,507 B480,495,508,511 R493,495,507,513 B426,429,507,521 B363,373,430,433 R369,373,389,428 B352,375,389,391 R372,386,390,399 B375,379,390,402 B340,360,380,385 B310,317,361,371 R317,317,325,342`],
[100, `B96,140,200,210`], [102, `R128,140,200,210`],
[160, `R460,470,489,495 R486,488,501,513 B445,446,501,515 R440,446,450,505 R419,449,451,478 B415,417,451,460 B417,427,434,438 B411,414,428,428 B393,402,415,430 B373,386,403,408 B369,381,387,415 B354,357,382,384`],
[174, `R380,380,444,449 R420,443,472,479 B418,432,472,496 R420,432,440,441 B403,417,430,436 R412,417,449,453 B405,419,449,461 R417,419,449,452 R442,448,464,506 B451,454,464,480 R452,455,473,475 R471,473,486,497 R485,485,533,554 B461,479,533,537 B449,464,480,490 B452,464,465,472 R450,464,471,480 R458,470,476,478 B424,456,476,480 R430,456,458,471 R444,456,503,509 B380,392,503,503 R373,391,400,406 B392,395,400,418 B347,391,396,408 R356,391,454,458 B400,403,454,460 R402,402,430,444 R419,427,441,465 B428,439,441,456 B392,431,440,450 R416,431,520,527 B475,476,520,531 R470,476,500,504 R512,519,535,544 B496,504,535,536 R483,504,505,524 R480,504,534,541 B486,493,534,539 R489,493,500,505 R494,499,516,521 R508,515,531,537 R506,530,589,598 B560,587,589,615 R562,587,607,610 R598,606,617,627 R607,616,634,645 R631,633,661,668 B635,637,661,698 R634,637,661,673 B633,656,661,674 R655,655,684,692 R672,683,688,692 B660,673,688,689 B664,667,674,702 B636,650,668,678 B623,629,651,663 R620,629,633,646 B600,603,628,635 B595,598,603,613 B571,572,599,625 B563,569,573,615 R549,569,571,581 R566,570,577,589 R566,580,590,594 R573,589,592,600 B523,552,592,610 B512,538,553,555 R522,538,587,601 R582,586,605,610 B588,596,608,612 B582,582,596,606 R580,582,593,625 R584,592,628,638 R610,627,650,663 B625,627,650,656 B614,623,637,642 R620,623,642,650 B580,581,642,653 R568,581,598,611 B549,562,598,607 R553,562,581,588 B573,575,588,593 R572,575,598,600 B567,588,598,621 B567,571,589,607 B523,543,572,573 B524,527,544,544 B514,518,533,534 B509,514,519,527 R507,514,526,528 R517,525,527,553 R526,526,541,550 B524,540,541,557 B525,531,536,548 R517,531,534,535 B489,497,534,550 B477,480,497,506 B441,453,481,485 B448,451,454,457 B439,452,465,467 B447,449,453,468 R436,449,506,522 R500,505,520,544 R492,519,540,542 B526,537,540,561 B525,527,552,552 R520,527,531,542 B528,530,531,593 R522,530,604,611 R568,603,625,640 R616,624,629,644 B621,627,635,640 B601,606,628,635 R581,606,642,650 B590,597,642,643 R594,596,627,646 R620,626,634,640 B616,617,639,646 R615,617,634,639 R632,633,657,702 B639,651,657,674 B621,636,652,657`]];
const colours = { B: '#00008b', R: '#dc143c', K: '#000' };
const X0 = 268, Y0 = 85;
let out = `<rect x="0" y="${636 - Y0}" width="100%" height="1" fill="#c0c0c0"/>`;
for (const [start, text] of runs) {
  text.split(' ').forEach((bar, i) => {
    const [high, top, bottom, low] = bar.slice(1).split(',').map(v => v - Y0);
    const x = 271 + 4 * (start + i) - X0;
    out += `<path fill="${colours[bar[0]]}" d="M${x} ${high}h1V${low}h-1zM${x - 1} ${top}h3V${bottom}h-3z"/>`;
  });
}
// Calendar event flags along the bottom edge: x, width, label, tint.
const flags = [[1461, 28, '22:30', '#f4f4f4'], [1431, 28, '19:00', '#f4f4f4'], [1427, 4, '', '#f4f4f4'], [1423, 4, '', '#afeeee'], [1415, 8, '0', '#afeeee'], [1411, 4, '', '#afeeee'], [1407, 4, '', '#f4f4f4'], [1403, 4, '', '#f4f4f4'], [1399, 4, '', '#f4f4f4'], [1383, 16, '29:', '#f4f4f4'], [1343, 16, '03:', '#f4f4f4'], [1359, 28, '16:45', '#afeeee']];
for (const [fx, w, label, tint] of flags) {
  const x = fx - X0, y = 804 - Y0, tip = w > 20 ? 2 : 0;
  out += `<path d="M${x}.5 ${y + 16}V${y}.500h${w - tip}l${tip} 6l-${tip} 6h-${w - tip}" fill="${tint}" stroke="#000"/>`;
  if (label) out += `<text x="${x + 2}" y="${y + 10}">${label}</text>`;
}
out += `<path d="M1183 0h8l-4 4z" fill="#b0b0b0"/>`;
document.getElementById('candles-layer').innerHTML = out;
```
